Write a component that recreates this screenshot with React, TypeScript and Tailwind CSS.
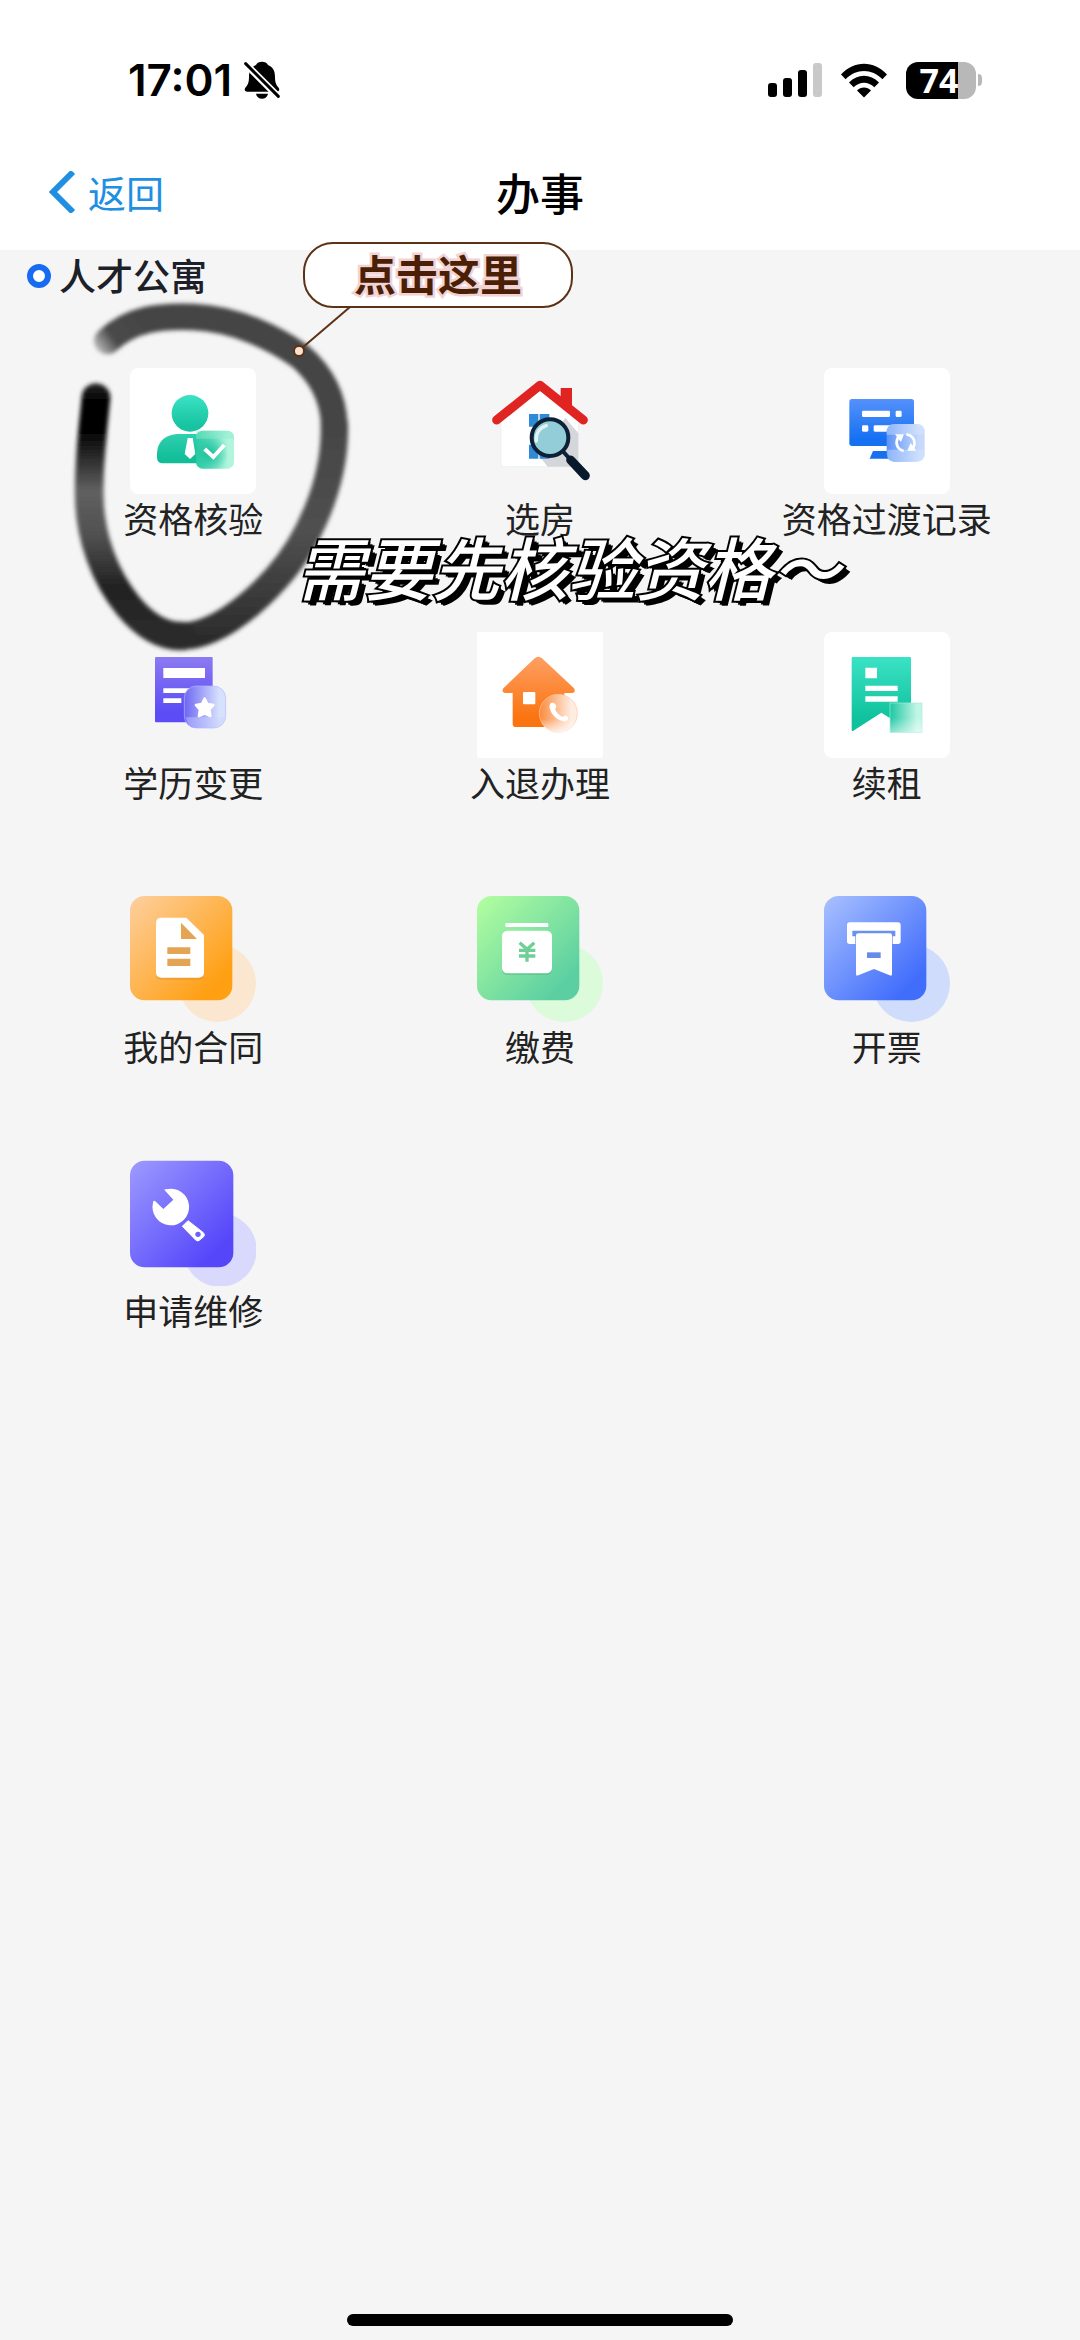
import type { ReactNode } from "react";

function Gradient({ id, from, to, diagonal = false, across = false }: { id: string; from: string; to: string; diagonal?: boolean; across?: boolean }) {
  return (
    <linearGradient id={id} x1="0" y1="0" x2={diagonal || across ? "1" : "0"} y2={across ? "0" : "1"}>
      <stop offset="0" stopColor={from} />
      <stop offset="0.85" stopColor={to} />
    </linearGradient>
  );
}

function Icon({ children }: { children: ReactNode }) {
  return (
    <svg viewBox="0 0 378 378" className="size-full" aria-hidden="true">
      {children}
    </svg>
  );
}

const VerifyIcon = () => (
  <Icon>
    <defs>
      <Gradient id="vHead" from="#3be3c4" to="#17c3a0" />
      <Gradient id="vBody" from="#2fd0b0" to="#12bd98" />
      <Gradient id="vBadge" from="#2bcba6" to="#b2f5dd" across />
      <radialGradient id="vGlow" cx="0.35" cy="0.6" r="0.5">
        <stop offset="0" stopColor="#19c39c" />
        <stop offset="1" stopColor="#19c39c" stopOpacity="0" />
      </radialGradient>
    </defs>
    <circle cx="180" cy="136" r="55" fill="url(#vHead)" />
    <path d="M81 260 C81 218 108 198 150 198 H240 V286 H98 Q81 286 81 268 Z" fill="url(#vBody)" />
    <rect x="198" y="188" width="114" height="114" rx="20" fill="url(#vBadge)" />
    <rect x="198" y="188" width="114" height="114" rx="20" fill="url(#vGlow)" />
    <path d="M198 188 H292 Q312 188 312 208 V212 H198 Z" fill="#8cebcb" opacity="0.45" />
    <path d="M173 210 H188 L196 258 L180 273 L164 258 Z" fill="white" />
    <path d="M224 243 L250 267 L283 231" fill="none" stroke="white" strokeWidth="12" />
  </Icon>
);

const HouseSearchIcon = () => (
  <Icon>
    <path d="M72 140 L189 48 L304 140 V286 Q304 296 294 296 H82 Q72 296 72 286 Z" fill="white" stroke="#e2eef1" strokeWidth="2" />
    <path d="M265 150 L304 196 V296 H212 L182 258 Z" fill="#d5d6da" />
    <g fill="#2f8ad6">
      <path d="M156 138 H184 V176 H156 Z M188 138 H217 V176 H188 Z" />
      <path d="M156 230 H184 V272 H156 Z M188 230 H217 V272 H188 Z" />
    </g>
    <path d="M251 60 H285 V122 L251 96 Z" fill="#e02422" />
    <path d="M59 156 L189 52 L319 156" fill="none" stroke="#e02422" strokeWidth="27" strokeLinecap="round" strokeLinejoin="round" />
    <circle cx="219" cy="209" r="55" fill="#93ced8" stroke="#0e2036" strokeWidth="12" />
    <path d="M178 219 C176 194 190 178 208 173" fill="none" stroke="#dff4f7" strokeWidth="10" strokeLinecap="round" />
    <path d="M256 248 L284 279" stroke="#0e2036" strokeWidth="12" />
    <path d="M281 276 L325 323" stroke="#07192b" strokeWidth="27" strokeLinecap="round" />
  </Icon>
);

const RecordIcon = () => (
  <Icon>
    <defs>
      <Gradient id="rScreen" from="#5591fb" to="#1671f2" />
      <Gradient id="rBadge" from="#5c93f8" to="#c7dafc" across />
    </defs>
    <rect x="76" y="93" width="194" height="141" rx="8" fill="url(#rScreen)" />
    <path d="M147 249 H210 V272 H137 Z" fill="#1770f0" />
    <g fill="white">
      <rect x="114" y="128" width="84" height="19" rx="4" />
      <rect x="215" y="128" width="18" height="19" rx="4" />
      <rect x="114" y="172" width="19" height="19" rx="4" />
      <rect x="149" y="172" width="60" height="19" rx="4" />
    </g>
    <rect x="188" y="168" width="114" height="113" rx="22" fill="url(#rBadge)" />
    <path d="M188 190 Q188 168 210 168 H280 Q302 168 302 190 V200 H188 Z" fill="#dce8ff" opacity="0.4" />
    <path d="M190 245 H300 V260 Q298 280 280 280 H210 Q190 280 190 260 Z" fill="#d8e5ff" opacity="0.4" />
    <g fill="none" stroke="white" strokeWidth="8">
      <path d="M239 249 C219 244 213 226 222 208" />
      <path d="M247 199 C270 203 277 222 267 241" />
    </g>
    <path d="M213 199 H240 L231 222 Z M277 248 H250 L260 225 Z" fill="white" />
  </Icon>
);

const DegreeIcon = () => (
  <Icon>
    <defs>
      <Gradient id="dDoc" from="#8b7bf2" to="#5b4cf5" />
      <Gradient id="dBadge" from="#6d67f4" to="#d6e2fd" across />
    </defs>
    <rect x="75" y="75" width="173" height="196" rx="3" fill="url(#dDoc)" />
    <path d="M100 108 H225 V138 H100 Z M100 169 H180 V183 H100 Z M100 199 H154 V213 H100 Z" fill="white" />
    <rect x="163" y="162" width="124" height="126" rx="36" fill="url(#dBadge)" stroke="#b9b7fb" strokeWidth="2" />
    <path d="M168 256 H285 Q280 286 250 287 H200 Q172 286 168 256 Z" fill="#c9d3fe" opacity="0.45" />
    <path d="M224 200 L232 216 L250 219 L238 233 L241 252 L224 244 L207 252 L210 233 L198 219 L216 216 Z" fill="white" stroke="white" strokeWidth="8" strokeLinejoin="round" />
  </Icon>
);

const MoveIcon = () => (
  <Icon>
    <defs>
      <Gradient id="mHouse" from="#ff9f63" to="#fa7512" />
      <Gradient id="mBadge" from="#fb8a3e" to="#ffede1" across />
      <linearGradient id="mFade" x1="0" y1="0" x2="0" y2="1">
        <stop offset="0.65" stopColor="#fff" stopOpacity="0" />
        <stop offset="1" stopColor="#fff" stopOpacity="0.8" />
      </linearGradient>
    </defs>
    <path d="M173 79 Q184 69 195 79 L291 169 Q298 182 284 183 H262 V285 H117 Q107 285 107 275 V183 H86 Q72 182 79 169 Z" fill="url(#mHouse)" />
    <rect x="138" y="180" width="37" height="37" rx="3" fill="white" />
    <circle cx="244" cy="244" r="57" fill="url(#mBadge)" stroke="#ffc6a1" strokeWidth="2" />
    <circle cx="244" cy="244" r="58" fill="url(#mFade)" />
    <path d="M227 212 C218 211 216 222 219 232 C225 250 240 264 259 268 C267 269 275 265 273 256 C271 250 262 249 257 255 C247 251 238 242 234 231 C242 224 236 213 227 212 Z" fill="white" />
  </Icon>
);

const RenewIcon = () => (
  <Icon>
    <defs>
      <Gradient id="nDoc" from="#3be2c5" to="#0fc19c" />
      <Gradient id="nBadge" from="#1dc8a4" to="#c3f5e5" across />
      <linearGradient id="nFade" x1="0" y1="0" x2="0" y2="1">
        <stop offset="0.5" stopColor="#fff" stopOpacity="0" />
        <stop offset="1" stopColor="#fff" stopOpacity="0.5" />
      </linearGradient>
    </defs>
    <path d="M86 75 H258 Q261 75 261 78 V297 L172 242 L88 296 Q83 299 83 294 V78 Q83 75 86 75 Z" fill="url(#nDoc)" />
    <path d="M124 107 H159 V139 H124 Z M124 161 H221 V177 H124 Z M124 193 H221 V209 H124 Z" fill="white" />
    <rect x="198" y="213" width="96" height="89" fill="white" />
    <rect x="198" y="213" width="96" height="89" fill="url(#nBadge)" stroke="#a5eedc" strokeWidth="2" />
    <rect x="198" y="213" width="96" height="89" fill="url(#nFade)" />
  </Icon>
);

const ContractIcon = () => (
  <Icon>
    <defs>
      <Gradient id="cBox" from="#fdd0a0" to="#ff9f12" diagonal />
    </defs>
    <circle cx="262" cy="262" r="116" fill="#fbe7cf" />
    <rect width="307" height="313" rx="44" fill="url(#cBox)" />
    <path d="M94 71 H169 L222 123 V235 Q222 251 206 251 H94 Q78 251 78 235 V87 Q78 71 94 71 Z" fill="#c8741a" opacity="0.25" />
    <path d="M94 65 H169 L222 117 V229 Q222 245 206 245 H94 Q78 245 78 229 V81 Q78 65 94 65 Z" fill="white" />
    <path d="M153 80 L201 129 H153 Z M112 154 H181 V174 H112 Z M112 188 H181 V210 H112 Z" fill="#e3a454" />
  </Icon>
);

const PaymentIcon = () => (
  <Icon>
    <defs>
      <Gradient id="pBox" from="#b4ff9f" to="#5bcfa2" diagonal />
    </defs>
    <circle cx="262" cy="262" r="116" fill="#dbfbdb" />
    <rect width="307" height="313" rx="44" fill="url(#pBox)" />
    <rect x="75" y="109" width="150" height="128" rx="16" fill="#3b9d70" opacity="0.3" />
    <rect x="85" y="81" width="129" height="12" rx="3" fill="white" />
    <rect x="75" y="104" width="150" height="128" rx="16" fill="white" />
    <path d="M128 140 L150 160 L172 140 M126 163 H175 M126 180 H175 M150 158 V197" fill="none" stroke="#6fcf97" strokeWidth="10" />
  </Icon>
);

const InvoiceIcon = () => (
  <Icon>
    <defs>
      <Gradient id="iBox" from="#a9c1ff" to="#416dfb" diagonal />
    </defs>
    <circle cx="262" cy="262" r="116" fill="#d0dcfb" />
    <rect width="307" height="313" rx="44" fill="url(#iBox)" />
    <rect x="69" y="79" width="161" height="65" rx="8" fill="white" />
    <path d="M85 104 H214 V121 H206 V146 H94 V121 H85 Z" fill="#6b91ef" />
    <path d="M103 112 H198 Q204 112 204 118 V234 Q204 241 197 238 L150 219 L103 238 Q96 241 96 234 V118 Q96 112 103 112 Z" fill="white" />
    <rect x="129" y="169" width="41" height="17" fill="#668cea" />
  </Icon>
);

const RepairIcon = () => (
  <Icon>
    <defs>
      <Gradient id="wBox" from="#9d9bff" to="#5546fa" diagonal />
    </defs>
    <circle cx="270" cy="270" r="110" fill="#d9d9fd" />
    <rect y="2" width="310" height="320" rx="44" fill="url(#wBox)" />
    <path d="M104 91 Q102 87 108 88 A55 55 0 1 1 69 128 Q69 120 75 123 L100 147 L130 119 Z" fill="white" />
    <path d="M174 182 L220 218 Q226 224 221 230 L208 241 Q203 245 197 240 L157 199 Z" fill="white" stroke="white" strokeWidth="3" strokeLinejoin="round" />
    <circle cx="204" cy="223" r="8" fill="#6b60fb" />
  </Icon>
);

const services: { label: string; icon: ReactNode; tile: string }[] = [
  { label: "资格核验", icon: <VerifyIcon />, tile: "rounded-lg bg-white" },
  { label: "选房", icon: <HouseSearchIcon />, tile: "" },
  { label: "资格过渡记录", icon: <RecordIcon />, tile: "rounded-lg bg-white" },
  { label: "学历变更", icon: <DegreeIcon />, tile: "" },
  { label: "入退办理", icon: <MoveIcon />, tile: "rounded-xs bg-white" },
  { label: "续租", icon: <RenewIcon />, tile: "rounded-lg bg-white" },
  { label: "我的合同", icon: <ContractIcon />, tile: "" },
  { label: "缴费", icon: <PaymentIcon />, tile: "" },
  { label: "开票", icon: <InvoiceIcon />, tile: "" },
  { label: "申请维修", icon: <RepairIcon />, tile: "" },
];

function StatusBar() {
  return (
    <div className="flex h-40 items-center justify-between pr-[98px] pl-32">
      <div className="flex items-center gap-3">
        <span className="font-['Inter'] text-[44px] leading-none font-semibold">17:01</span>
        <svg viewBox="0 0 108 114" className="h-[38px] w-9" role="img" aria-label="静音">
          <path d="M54 2 C62 2 69 5 72 12 C88 19 93 31 93 48 C93 66 97 72 104 80 C108 86 105 92 98 92 H10 C2 92 0 86 4 80 C11 72 15 66 15 48 C15 31 20 19 36 12 C39 5 46 2 54 2 Z" />
          <path d="M36 98 H72 C70 108 63 113 54 113 C45 113 38 108 36 98 Z" />
          <path d="M0 4 L106 110" stroke="white" strokeWidth="21" />
          <path d="M5 8 L103 106" stroke="black" strokeWidth="9" strokeLinecap="round" />
        </svg>
      </div>
      <div className="flex items-center">
        <svg viewBox="0 0 54 34" className="h-[34px] w-[54px]" role="img" aria-label="信号">
          <rect y="20" width="9" height="14" rx="3" />
          <rect x="15" y="15" width="9" height="19" rx="3" />
          <rect x="30" y="7" width="9" height="27" rx="3" />
          <rect x="45" width="9" height="34" rx="3" fill="#c9c9c9" />
        </svg>
        <svg viewBox="0 0 144 104" className="ml-[18px] h-[35px] w-12" role="img" aria-label="无线网络">
          <path d="M3 34 C42 -9 102 -9 141 34 L127 48 C96 15 48 15 17 48 Z" />
          <path d="M27 58 C53 31 91 31 117 58 L103 72 C85 54 59 54 41 72 Z" />
          <path d="M51 82 C62 70 82 70 93 82 L72 103 Z" />
        </svg>
        <div className="ml-[18px] flex items-center gap-[2px]" role="img" aria-label="电量 74%">
          <div className="flex h-[37px] w-[70px] items-center justify-center rounded-xl bg-linear-to-r from-black from-74% to-[#b8b8b8] to-74% pr-1">
            <span className="font-['Open_Sans'] text-[34px] leading-none font-bold text-white">74</span>
          </div>
          <div className="h-3 w-1 rounded-r-full bg-[#b8b8b8]" />
        </div>
      </div>
    </div>
  );
}

function BrushCircle() {
  return (
    <svg viewBox="0 0 960 1110" className="pointer-events-none absolute top-[41px] left-[50px] h-[370px] w-80" aria-hidden="true">
      <defs>
        <filter id="soft" x="-10%" y="-10%" width="120%" height="120%">
          <feGaussianBlur stdDeviation="6" />
        </filter>
        <linearGradient id="topInk" gradientUnits="userSpaceOnUse" x1="130" y1="190" x2="270" y2="90">
          <stop offset="0" stopColor="#ddd" />
          <stop offset="0.45" stopColor="#4a4a4a" />
          <stop offset="1" stopColor="#454545" />
        </linearGradient>
        <linearGradient id="sideInk" gradientUnits="userSpaceOnUse" x1="0" y1="400" x2="0" y2="1040">
          <stop offset="0" stopColor="#454545" />
          <stop offset="0.5" stopColor="#505050" />
          <stop offset="1" stopColor="#2c2c2c" />
        </linearGradient>
        <linearGradient id="leftInk" gradientUnits="userSpaceOnUse" x1="0" y1="280" x2="0" y2="1040">
          <stop offset="0" stopColor="#222" />
          <stop offset="0.07" stopColor="#000" />
          <stop offset="0.18" stopColor="#000" />
          <stop offset="0.42" stopColor="#606060" />
          <stop offset="0.6" stopColor="#505050" />
          <stop offset="0.8" stopColor="#222" />
          <stop offset="1" stopColor="#2c2c2c" />
        </linearGradient>
      </defs>
      <g fill="none" strokeLinecap="round" filter="url(#soft)">
        <path d="M853 400 C858 580 770 760 680 860 C600 950 490 1035 395 1035" stroke="url(#sideInk)" strokeWidth="82" />
        <path d="M172 150 C245 82 330 74 430 78 C560 83 680 145 750 195 C820 255 851 330 853 405" stroke="url(#topInk)" strokeWidth="80" />
        <path d="M138 320 C128 420 115 520 118 620 C120 740 165 860 235 945 C285 1005 335 1036 395 1035" stroke="url(#leftInk)" strokeWidth="86" />
      </g>
    </svg>
  );
}

function Callout() {
  return (
    <div className="pointer-events-none absolute -top-2 left-[303px]">
      <div className="flex h-[66px] w-[270px] items-center justify-center rounded-[30px] border-2 border-[#5b3216] bg-white pb-1 text-[42px] leading-none font-bold text-[#4a1f06] [-webkit-text-stroke:5px_#f2d3d5] [paint-order:stroke_fill]">
        点击这里
      </div>
      <svg viewBox="0 0 60 54" className="-mt-[2px] -ml-3 h-[54px] w-[60px]" aria-hidden="true">
        <path d="M59 1 L11 42" stroke="#5b3216" strokeWidth="2" />
        <circle cx="8" cy="45" r="5" fill="#ffe1d2" stroke="#5b3216" strokeWidth="2" />
      </svg>
    </div>
  );
}

export default function App() {
  return (
    <div className="flex min-h-screen flex-col bg-[#f5f5f5] font-['Noto_Sans_CJK_SC',sans-serif] text-black">
      <header className="bg-white">
        <StatusBar />
        <nav className="grid h-[90px] grid-cols-3 items-start px-12 pt-1">
          <button type="button" className="flex items-center gap-3 text-[38px] leading-[56px] text-[#1e8fe1]">
            <svg viewBox="0 0 28 42" className="h-[42px] w-7" aria-hidden="true">
              <path d="M25 1 L5 21 L25 41" fill="none" stroke="currentColor" strokeWidth="6" />
            </svg>
            返回
          </button>
          <h1 className="text-center text-[44px] leading-[56px] font-medium">办事</h1>
        </nav>
      </header>

      <main className="relative grow">
        <h2 className="flex h-[52px] items-center gap-2 pl-[27px] text-[37px] font-medium text-[#1d1f29]">
          <span className="size-6 rounded-full border-[6px] border-[#176bf3] bg-white" />
          人才公寓
        </h2>
        <div className="mt-[66px] grid grid-cols-3 gap-y-[90px] px-5">
          {services.map(({ label, icon, tile }) => (
            <button key={label} type="button" className="flex flex-col items-center">
              <span className={`size-[126px] overflow-hidden ${tile}`}>{icon}</span>
              <span className="text-[35px] leading-[48px] whitespace-nowrap text-[#222]">{label}</span>
            </button>
          ))}
        </div>

        <BrushCircle />
        <Callout />
        <p className="pointer-events-none absolute top-[276px] left-[296px] text-[68px] leading-[80px] font-medium whitespace-nowrap text-white italic [-webkit-text-stroke:4px_black] [paint-order:stroke_fill] [text-shadow:2px_2px_0_#000,4px_4px_0_#000,6px_5px_0_#000]">
          需要先核验资格～
        </p>
      </main>

      <footer className="flex justify-center pb-[14px]">
        <div className="h-3 w-[386px] rounded-full bg-black" />
      </footer>
    </div>
  );
}
